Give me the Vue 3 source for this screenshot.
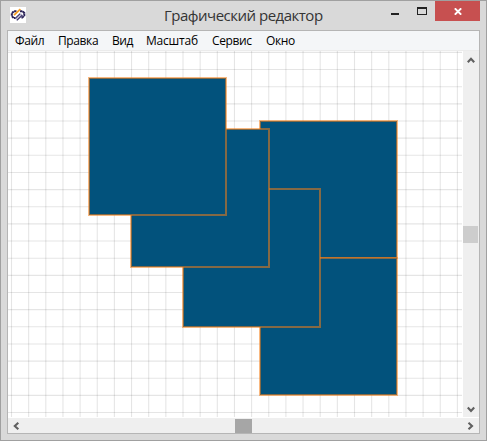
<script setup>
const menu = [
  { label: 'Файл', id: 'file' },
  { label: 'Правка', id: 'edit' },
  { label: 'Вид', id: 'view' },
  { label: 'Масштаб', id: 'zoom' },
  { label: 'Сервис', id: 'tools' },
  { label: 'Окно', id: 'windows' },
]
const step = 17.15
const cols = Array.from({ length: 27 }, (_, i) => 3.5 + i * step)
const rows = Array.from({ length: 22 }, (_, i) => 1.4 + i * step)
const squares = [
  { x: 252, y: 70, w: 137, h: 137 },
  { x: 252, y: 207, w: 137, h: 137 },
  { x: 175, y: 138, w: 137, h: 138 },
  { x: 123, y: 78, w: 138, h: 138 },
  { x: 81, y: 27, w: 137, h: 137 },
]
</script>

<template>
  <div class="frame">
    <header class="titlebar">
      <svg class="logo" width="16" height="16" viewBox="0 0 16 16">
        <rect width="16" height="16" fill="#fff" />
        <path d="M6.5 4.2H4L1.8 6.2V9L3.6 11H5.2M10 4.2H12.5L14.3 6V8.6L12.3 10.6H11" fill="none" stroke="#2b2358" stroke-width="2" stroke-dasharray="2.4 .4" />
        <path d="M6.8 13.4L12.4 8M5 11.6L10.2 6.6" stroke="#352d67" stroke-width="1.3" />
        <path d="M5.9 12.4L11.6 7" stroke="#aaa5c0" stroke-width="1.3" />
        <path d="M4 8.2L10.4 2.2" stroke="#f49c20" stroke-width="1.8" />
      </svg>
      <h1 class="title">Графический редактор</h1>
      <div class="controls">
        <svg class="glyphs" width="65" height="20" viewBox="0 0 65 20">
          <rect x="21" y="13" width="8" height="2" fill="#222" />
          <path d="M47 7h10v8H47zM48 9v5h8V9z" fill="#222" fill-rule="evenodd" />
        </svg>
        <div class="close">
          <svg width="8" height="7" viewBox="0 0 8 7">
            <path d="M.8 .3L7.2 6.7M7.2 .3L.8 6.7" stroke="#fff" stroke-width="1.9" />
          </svg>
        </div>
      </div>
    </header>
    <main class="client">
      <nav class="menu">
        <span v-for="m in menu" :key="m.id" class="item" :class="m.id">{{ m.label }}</span>
      </nav>
      <div class="work">
        <svg class="canvas" width="455" height="366" viewBox="0 0 455 366">
          <rect width="455" height="366" fill="#fff" />
          <g stroke="#000" stroke-opacity=".1" stroke-width="1.1">
            <line v-for="x in cols" :key="'c' + x" :x1="x" :x2="x" y1="0" y2="366" />
            <line v-for="y in rows" :key="'r' + y" x1="0" x2="454" :y1="y" :y2="y" />
          </g>
          <rect
            v-for="(s, i) in squares"
            :key="i"
            class="square"
            :x="s.x"
            :y="s.y"
            :width="s.w"
            :height="s.h"
          />
        </svg>
        <div class="vscroll">
          <svg width="8" height="7" viewBox="0 0 8 7"><path class="arrow" d="M.8 5.3L4 1.8L7.2 5.3" /></svg>
          <div class="vthumb"></div>
          <svg width="8" height="7" viewBox="0 0 8 7"><path class="arrow" d="M.8 1.5L4 5L7.2 1.5" /></svg>
        </div>
      </div>
      <div class="hscroll">
        <svg width="7" height="8" viewBox="0 0 7 8"><path class="arrow" d="M5.3 .8L1.8 4L5.3 7.2" /></svg>
        <div class="hthumb"></div>
        <svg width="7" height="8" viewBox="0 0 7 8"><path class="arrow" d="M1.5 .8L5 4L1.5 7.2" /></svg>
      </div>
    </main>
  </div>
</template>

<style>
body {
  margin: 0;
  overflow: hidden;
}
</style>

<style scoped>
.frame {
  box-sizing: border-box;
  width: 487px;
  height: 441px;
  border: 1px solid #a0a0a0;
  background: #d9d9d9;
  padding: 0 6px 6px;
  display: flex;
  flex-direction: column;
  font-family: "Open Sans", "Noto Sans", sans-serif;
}
.titlebar {
  height: 29px;
  display: flex;
  align-items: flex-start;
  flex: none;
}
.logo {
  margin: 6px 0 0 3px;
}
.title {
  margin: 0 0 0 138px;
  width: 180px;
  height: 29px;
  font-size: 15px;
  font-weight: 400;
  line-height: 29px;
  letter-spacing: -0.5px;
  color: #343434;
  white-space: nowrap;
}
.controls {
  display: flex;
  margin-left: auto;
}
.glyphs {
  margin-top: -1px;
}
.close {
  width: 45px;
  height: 20px;
  background: #c75050;
  display: flex;
  align-items: center;
  justify-content: center;
}
.client {
  box-sizing: border-box;
  width: 473px;
  height: 404px;
  border: 1px solid #b5b5b5;
  background: #fff;
}
.menu {
  box-sizing: border-box;
  height: 20px;
  background: #f4f6f8;
  border-bottom: 1px solid #ebebeb;
  padding-left: 7px;
  display: flex;
  font-size: 12px;
  line-height: 20px;
  letter-spacing: -0.38px;
  color: #000;
  white-space: nowrap;
}
.item {
  flex: none;
}
.file { width: 43px; }
.edit { width: 54px; }
.view { width: 34px; }
.zoom { width: 66px; letter-spacing: -0.2px; }
.tools { width: 54px; }
.work {
  display: flex;
  height: 367px;
}
.canvas {
  display: block;
}
.square {
  fill: #02527c;
  stroke: #f57e14;
  stroke-opacity: .54;
  stroke-width: 2;
}
.vscroll {
  box-sizing: border-box;
  width: 16px;
  height: 366px;
  background: #efefef;
  display: flex;
  flex-direction: column;
  align-items: center;
  justify-content: space-between;
  padding: 6px 1px 4px 0;
}
.vthumb {
  width: 15px;
  height: 17px;
  background: #cdcdcd;
  margin-bottom: 2px;
}
.hscroll {
  box-sizing: border-box;
  height: 15px;
  background: #efefef;
  display: flex;
  align-items: center;
  justify-content: space-between;
  padding: 0 5px;
}
.hthumb {
  width: 17px;
  height: 14px;
  background: #a6a6a6;
}
.arrow {
  fill: none;
  stroke: #606060;
  stroke-width: 2.1;
}
</style>
